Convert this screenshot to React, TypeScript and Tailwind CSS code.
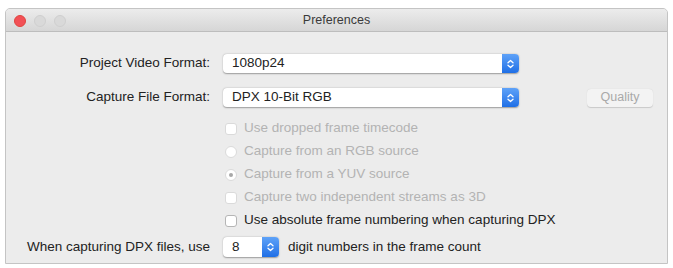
import React from "react";

const font = { fontFamily: '"Liberation Sans", Arial, sans-serif' };

function Stepper({ w = "w-[17px]" }: { w?: string }) {
  return (
    <div className={`${w} h-full rounded-r-[4px] bg-gradient-to-b from-[#5ea2f8] to-[#1e6fe6] flex items-center justify-center`}>
      <svg width="7" height="10" viewBox="0 0 7 10" fill="none" stroke="white" strokeWidth="1.3" strokeLinecap="round" strokeLinejoin="round">
        <path d="M1 3.8 L3.5 1.5 L6 3.8" />
        <path d="M1 6.2 L3.5 8.5 L6 6.2" />
      </svg>
    </div>
  );
}

function Select({ value }: { value: string }) {
  return (
    <div className="w-[296px] h-[19px] flex rounded-[4px] shadow-[0_0.5px_1.5px_rgba(0,0,0,0.35)] bg-white">
      <div className="flex-1 flex items-center pl-[9px] text-[13.5px] text-[#222]">{value}</div>
      <div className="w-[2px] bg-white" />
      <Stepper />
    </div>
  );
}

function Check({ label, disabled, radio, checked }: { label: string; disabled?: boolean; radio?: boolean; checked?: boolean }) {
  return (
    <div className="h-[23px] flex items-center">
      <div
        className={`w-[12px] h-[12px] ml-[2px] flex items-center justify-center bg-white ${radio ? "rounded-full" : "rounded-[3px]"} ${
          disabled ? "border border-[#dadada]" : "border border-[#b5b5b5]"
        }`}
      >
        {checked && <div className="w-[4px] h-[4px] rounded-full bg-[#a8a8a8]" />}
      </div>
      <span className={`ml-[7px] text-[13.5px] ${disabled ? "text-[#b3b3b3]" : "text-[#222]"}`}>{label}</span>
    </div>
  );
}

export default function App() {
  return (
    <div className="w-[673px] h-[268px] bg-white pt-[8px] pl-[5px]" style={font}>
      <div className="w-[663px] h-[256px] flex flex-col bg-[#ececec] border border-[#c4c4c4] rounded-t-[5px] overflow-hidden">
        <div className="h-[23px] shrink-0 relative flex items-center justify-center bg-gradient-to-b from-[#ececec] to-[#d6d6d6] border-b border-[#bdbdbd]">
          <div className="absolute left-[8px] top-[6px] flex gap-[8px]">
            <div className="w-[12px] h-[12px] rounded-full bg-[#f25056] border border-[#e0443e]" />
            <div className="w-[12px] h-[12px] rounded-full bg-[#d9d9d9] border border-[#cfcfcf]" />
            <div className="w-[12px] h-[12px] rounded-full bg-[#d9d9d9] border border-[#cfcfcf]" />
          </div>
          <span className="text-[12.5px] text-[#3a3a3a]">Preferences</span>
        </div>

        <div className="flex flex-col pt-[22px]">
          <div className="flex items-center h-[19px]">
            <div className="w-[204px] text-right text-[13.5px] text-[#222]">Project Video Format:</div>
            <div className="ml-[13px]">
              <Select value="1080p24" />
            </div>
          </div>
          <div className="flex items-center h-[19px] mt-[15px]">
            <div className="w-[204px] text-right text-[13.5px] text-[#222]">Capture File Format:</div>
            <div className="ml-[13px]">
              <Select value="DPX 10-Bit RGB" />
            </div>
            <div className="ml-[68px] w-[66px] h-[18px] flex items-center justify-center rounded-[4px] bg-[#f3f3f3] shadow-[0_0.5px_1px_rgba(0,0,0,0.15)] text-[12.5px] text-[#a9a9a9]">
              Quality
            </div>
          </div>

          <div className="flex flex-col pl-[217px] mt-[10px]">
            <Check label="Use dropped frame timecode" disabled />
            <Check label="Capture from an RGB source" disabled radio />
            <Check label="Capture from a YUV source" disabled radio checked />
            <Check label="Capture two independent streams as 3D" disabled />
            <Check label="Use absolute frame numbering when capturing DPX" />
          </div>

          <div className="flex items-center h-[20px] mt-[5px]">
            <div className="w-[204px] text-right text-[13.5px] text-[#222]">When capturing DPX files, use</div>
            <div className="ml-[13px] w-[56px] h-[20px] flex rounded-[4px] bg-white shadow-[0_0.5px_1.5px_rgba(0,0,0,0.35)]">
              <div className="flex-1 flex items-center pl-[9px] text-[13.5px] text-[#222]">8</div>
              <Stepper />
            </div>
            <span className="ml-[9px] text-[13.5px] text-[#222]">digit numbers in the frame count</span>
          </div>
        </div>
      </div>
    </div>
  );
}
